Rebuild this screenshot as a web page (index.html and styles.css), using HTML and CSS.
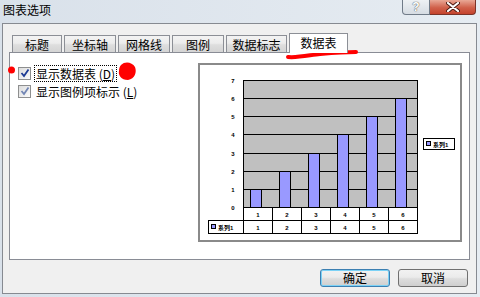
FILE: index.html
```html
<!DOCTYPE html>
<html lang="zh-CN">
<head>
    <meta charset="UTF-8">
    <title>图表选项</title>
    <link rel="stylesheet" href="styles.css">
</head>
<body>

<div class="window">
    <div class="titlebar">
        <span class="title">图表选项</span>
        <div class="caption-btns">
            <span class="cap-help">?</span>
            <span class="cap-close">
                <svg width="14" height="10" viewBox="0 0 14 10">
                    <path d="M2 1 L12 9 M12 1 L2 9" stroke="#4a1a12" stroke-width="4" stroke-linecap="round"/>
                    <path d="M2 1 L12 9 M12 1 L2 9" stroke="#ffffff" stroke-width="2.2" stroke-linecap="round"/>
                </svg>
            </span>
        </div>
    </div>

    <div class="frame">
        <div class="tabs">
            <div class="tab t1">标题</div>
            <div class="tab t2">坐标轴</div>
            <div class="tab t3">网格线</div>
            <div class="tab t4">图例</div>
            <div class="tab t5">数据标志</div>
            <div class="tab t6 active">数据表</div>
        </div>

        <div class="panel">
            <div class="options">
                <label class="opt">
                    <span class="check">
                        <svg width="10" height="10" viewBox="0 0 10 10"><path d="M1.5 5 L4 8 L8.5 1.5" fill="none" stroke="#1c3a94" stroke-width="1.8"/></svg>
                    </span>
                    <span class="opt-text focus">显示数据表 (<u>D</u>)</span>
                </label>
                <label class="opt">
                    <span class="check">
                        <svg width="10" height="10" viewBox="0 0 10 10"><path d="M1.5 5 L4 8 L8.5 1.5" fill="none" stroke="#7286b4" stroke-width="1.8"/></svg>
                    </span>
                    <span class="opt-text">显示图例项标示 (<u>L</u>)</span>
                </label>
            </div>

            <div class="preview">
                <svg width="260" height="175" viewBox="2 2 260 175" class="chart">
                    <rect x="45.5" y="17.5" width="174" height="127" fill="#c0c0c0" stroke="#000"/>
                    <g stroke="#000" stroke-width="1">
                        <line x1="45" y1="35.5" x2="219" y2="35.5"/>
                        <line x1="45" y1="53.5" x2="219" y2="53.5"/>
                        <line x1="45" y1="71.5" x2="219" y2="71.5"/>
                        <line x1="45" y1="90.5" x2="219" y2="90.5"/>
                        <line x1="45" y1="108.5" x2="219" y2="108.5"/>
                        <line x1="45" y1="126.5" x2="219" y2="126.5"/>
                    </g>
                    <g fill="#9999ff" stroke="#000" stroke-width="1">
                        <rect x="52.5" y="126.5" width="11" height="18"/>
                        <rect x="81.5" y="108.5" width="11" height="36"/>
                        <rect x="110.5" y="90.5" width="11" height="54"/>
                        <rect x="139.5" y="71.5" width="11" height="73"/>
                        <rect x="168.5" y="53.5" width="11" height="91"/>
                        <rect x="197.5" y="35.5" width="11" height="109"/>
                    </g>
                    <g class="tick" text-anchor="middle">
                        <text x="35" y="19.5">7</text>
                        <text x="35" y="37.5">6</text>
                        <text x="35" y="55.5">5</text>
                        <text x="35" y="73.5">4</text>
                        <text x="35" y="92.5">3</text>
                        <text x="35" y="110.5">2</text>
                        <text x="35" y="128.5">1</text>
                        <text x="35" y="146.5">0</text>
                    </g>
                    <rect x="45.5" y="144.5" width="174" height="13" fill="#fff" stroke="#000"/>
                    <rect x="10.5" y="157.5" width="209" height="13" fill="#fff" stroke="#000"/>
                    <g stroke="#000">
                        <line x1="45.5" y1="157" x2="45.5" y2="171"/>
                        <line x1="74.5" y1="144" x2="74.5" y2="171"/>
                        <line x1="103.5" y1="144" x2="103.5" y2="171"/>
                        <line x1="132.5" y1="144" x2="132.5" y2="171"/>
                        <line x1="161.5" y1="144" x2="161.5" y2="171"/>
                        <line x1="190.5" y1="144" x2="190.5" y2="171"/>
                    </g>
                    <g class="tick" text-anchor="middle">
                        <text x="60" y="154">1</text>
                        <text x="89" y="154">2</text>
                        <text x="118" y="154">3</text>
                        <text x="147" y="154">4</text>
                        <text x="176" y="154">5</text>
                        <text x="205" y="154">6</text>
                        <text x="60" y="167">1</text>
                        <text x="89" y="167">2</text>
                        <text x="118" y="167">3</text>
                        <text x="147" y="167">4</text>
                        <text x="176" y="167">5</text>
                        <text x="205" y="167">6</text>
                    </g>
                    <rect x="13.5" y="161.5" width="4" height="4" fill="#9999ff" stroke="#000"/>
                    <text class="tick" x="20" y="167">系列1</text>

                    <rect x="225.5" y="75.5" width="31" height="11" fill="#fff" stroke="#000"/>
                    <rect x="228.5" y="78.5" width="4" height="4" fill="#9999ff" stroke="#000"/>
                    <text class="tick" x="235" y="84">系列1</text>
                </svg>
            </div>
        </div>

        <div class="actions">
            <button class="btn default">确定</button>
            <button class="btn">取消</button>
        </div>
    </div>

    <svg class="marks" width="480" height="297">
        <path d="M288 57 C298 58 310 55 320 54 C332 53 345 52 356 52" fill="none" stroke="#ff0000" stroke-width="4" stroke-linecap="round"/>
        <circle cx="11.5" cy="70" r="3.5" fill="#ff0000"/>
        <path d="M121 65 C125 61 132 62 135 67 C137 72 135 79 128 80 C121 80 118 75 119 71 C119 68 120 66 121 65 Z" fill="#ff0000"/>
    </svg>
</div>

</body>
</html>
```

FILE: styles.css
```css
body {
    margin: 0;
    background-color: #dfe6ee;
    font-family: "Noto Sans CJK SC", "Liberation Sans", sans-serif;
    font-size: 12px;
    color: #000;
}
.window {
    position: relative;
    width: 480px;
    height: 297px;
    overflow: hidden;
    background: linear-gradient(90deg, #d9e1ea, #e6ecf2);
}
.titlebar {
    height: 23px;
    display: flex;
    justify-content: space-between;
}
.title {
    padding: 2px 0 0 3px;
    line-height: 16px;
}
.caption-btns {
    display: flex;
    margin-right: 4px;
    height: 15px;
}
.cap-help {
    width: 26px;
    border: 1px solid #707b88;
    border-top: none;
    border-radius: 0 0 0 4px;
    background: linear-gradient(#eef1f4, #d6dce3);
    color: #fff;
    font-family: "Liberation Sans", sans-serif;
    font-weight: bold;
    font-size: 12px;
    line-height: 14px;
    text-align: center;
    text-shadow: 0 0 1px #555, 0 0 1px #555;
}
.cap-close {
    width: 45px;
    border: 1px solid #7a3328;
    border-top: none;
    border-left: none;
    border-radius: 0 0 4px 0;
    background: linear-gradient(#e9a896, #d0604a 55%, #c4432d);
    display: flex;
    align-items: center;
    justify-content: center;
}
.frame {
    margin-left: 2px;
    width: 473px;
    height: 269px;
    border: 1px solid #868a91;
    background-color: #f0f0f0;
    padding: 9px 0 0 6px;
    box-sizing: border-box;
    width: 475px;
    height: 271px;
}
.tabs {
    display: flex;
    align-items: flex-end;
    gap: 2px;
    margin-left: 3px;
    height: 19px;
    position: relative;
    z-index: 1;
}
.tab {
    height: 17px;
    box-sizing: border-box;
    border: 1px solid #8c8f96;
    border-bottom: none;
    background: linear-gradient(#f3f3f3, #ececec 45%, #dedede 55%, #d4d4d4);
    text-align: center;
    line-height: 17px;
}
.t1 { width: 50px; }
.t2 { width: 52px; }
.t3 { width: 52px; }
.t4 { width: 52px; }
.t5 { width: 61px; }
.t6 { width: 59px; }
.tab.active {
    height: 20px;
    margin-bottom: -1px;
    background: #fff;
    line-height: 18px;
}
.panel {
    width: 461px;
    height: 208px;
    box-sizing: border-box;
    border: 1px solid #898c95;
    background-color: #fff;
    display: flex;
}
.options {
    flex: 1;
    padding: 11px 0 0 8px;
}
.opt {
    display: flex;
    align-items: center;
    height: 18px;
}
.check {
    width: 11px;
    height: 11px;
    border: 1px solid #8e8f8f;
    background: linear-gradient(135deg, #dcdcdc, #fbfbfb);
    display: flex;
    align-items: center;
    justify-content: center;
    margin-right: 4px;
}
.opt-text {
    padding: 0 1px;
    line-height: 15px;
}
.opt-text.focus {
    outline: 1px dotted #000;
    outline-offset: 0;
}
.preview {
    width: 264px;
    height: 179px;
    box-sizing: border-box;
    border: 2px solid #8a8a8a;
    margin: 10px 7px 0 0;
}
.chart {
    display: block;
}
.tick {
    font-family: "Liberation Sans", "Noto Sans CJK SC", sans-serif;
    font-size: 6px;
    font-weight: bold;
    fill: #000;
}
.actions {
    display: flex;
    justify-content: flex-end;
    gap: 8px;
    margin: 9px 8px 0 0;
}
.btn {
    width: 70px;
    height: 18px;
    padding: 0;
    border: 1px solid #707070;
    border-radius: 3px;
    background: linear-gradient(#f2f2f2, #ebebeb 45%, #dddddd 55%, #cfcfcf);
    font-family: "Noto Sans CJK SC", sans-serif;
    font-size: 12px;
    line-height: 16px;
    color: #000;
}
.btn.default {
    border-color: #3c7fb1;
    box-shadow: inset 0 0 0 1px #7cd2f6;
}
.marks {
    position: absolute;
    left: 0;
    top: 0;
    pointer-events: none;
}
```
